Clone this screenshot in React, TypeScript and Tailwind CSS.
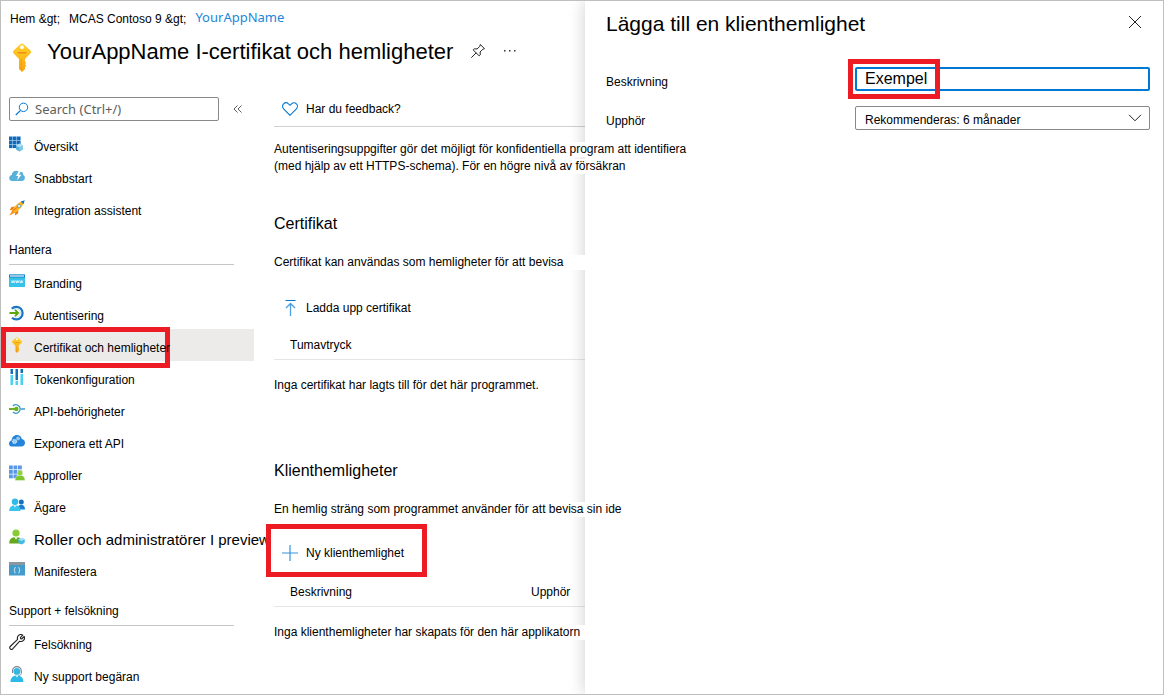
import type { ReactNode } from "react";

type NavItem = {
  label: string;
  icon: ReactNode;
  active?: boolean;
  large?: boolean;
};

const overviewItems: NavItem[] = [
  { label: "Översikt", icon: <GridCubeIcon /> },
  { label: "Snabbstart", icon: <CloudBoltIcon /> },
  { label: "Integration assistent", icon: <RocketIcon /> },
];

const manageItems: NavItem[] = [
  { label: "Branding", icon: <BrandingIcon /> },
  { label: "Autentisering", icon: <SignInIcon /> },
  { label: "Certifikat och hemligheter", icon: <KeyIcon className="size-4 shrink-0" />, active: true },
  { label: "Tokenkonfiguration", icon: <TokenIcon /> },
  { label: "API-behörigheter", icon: <ApiPermissionIcon /> },
  { label: "Exponera ett API", icon: <CloudGearIcon /> },
  { label: "Approller", icon: <AppRolesIcon /> },
  { label: "Ägare", icon: <OwnersIcon /> },
  { label: "Roller och administratörer I preview", icon: <AdminIcon />, large: true },
  { label: "Manifestera", icon: <ManifestIcon /> },
];

const supportItems: NavItem[] = [
  { label: "Felsökning", icon: <WrenchIcon /> },
  { label: "Ny support begäran", icon: <SupportIcon /> },
];

function GridCubeIcon() {
  return (
    <svg viewBox="0 0 16 16" className="size-4 shrink-0">
      {[0, 4, 8].map((y) =>
        [0, 4, 8].map((x) => (
          <rect key={`${x}-${y}`} x={x} y={y + 0.5} width="3.6" height="3.6" fill="#0f6cbd" />
        ))
      )}
      <path d="M10.500 7.500l3.500 2v4l-3.500 2-3.500-2v-4z" fill="#5ab4dc" />
      <path d="M10.500 7.500l3.500 2-3.500 2-3.500-2z" fill="#b7e1f3" />
      <path d="M10.500 11.500l3.500-2v4l-3.500 2z" fill="#83c9e8" />
    </svg>
  );
}

function CloudBoltIcon() {
  return (
    <svg viewBox="0 0 16 16" className="size-4 shrink-0">
      <path
        d="M3.200 13A3.200 3.200 0 0 1 .2 9.900c0-1.600 1.100-2.800 2.600-3C3 4.600 4.700 2.700 7.200 2.700c1 0 1.800.3 2.500.8 1.900-.6 4.500.7 4.600 3.500 1 .5 1.600 1.500 1.600 2.800 0 1.800-1.300 3.200-3.200 3.200z"
        fill="#56b0d9"
      />
      <path d="M10.200 2.500L7 8h2.200L8 12.500 12.500 6.700h-2.600L12 3z" fill="#fff" />
    </svg>
  );
}

function RocketIcon() {
  return (
    <svg viewBox="0 0 16 16" className="size-4 shrink-0">
      <path d="M6 6.500L2.500 7 .5 10.200l3.500-.4zM9.500 10L9 13.500l-3.200 2 .4-3.500z" fill="#f27d16" />
      <path d="M3.500 10L.3 15.700 6 12.500z" fill="#f7931e" />
      <path d="M13 1.200L9.500 3C7 5 4.500 8 3.200 10.500l2.300 2.300C8 11.500 11 9 13 6.500l1.800-3.700z" fill="#ffb41c" />
      <path d="M15.700.3l-4 1.200 2.800 2.800z" fill="#1d6fc0" />
      <circle cx="10" cy="6" r="1.600" fill="#e8f6fd" stroke="#2a9bd6" strokeWidth=".6" />
      <path d="M3 11.500L8.500 7" stroke="#e8721a" strokeWidth="1" />
    </svg>
  );
}

function BrandingIcon() {
  return (
    <svg viewBox="0 0 16 16" className="size-4 shrink-0">
      <rect y="1.500" width="16" height="12.500" rx=".6" fill="#37c2ea" />
      <path d="M.6 1.500h14.800a.6.6 0 0 1 .6.6V4.500H0V2.100a.6.6 0 0 1 .6-.6z" fill="#1b7fc4" />
      <rect x="1" y="2.400" width="14" height="1.200" fill="#e6f7fd" />
      <path
        d="M2.300 7.500l.9 2.500.9-2.500.9 2.500.8-2.500M6.700 7.500l.7 2.500.8-2.500.8 2.500.7-2.500M10.600 7.500l.8 2.500.8-2.500.8 2.500.8-2.500"
        fill="none"
        stroke="#fff"
        strokeWidth=".7"
      />
    </svg>
  );
}

function SignInIcon() {
  return (
    <svg viewBox="0 0 16 16" className="size-4 shrink-0" fill="none">
      <path d="M2.800 3.700A6.300 6.300 0 1 1 3 12.700" stroke="#1b74c4" strokeWidth="2.200" />
      <path d="M4.800 4.900A4 4 0 0 1 11.500 8a4 4 0 0 1-6.500 3.200" stroke="#9cd3ef" strokeWidth=".6" />
      <path d="M.5 8h8M6 4.800L9.200 8 6 11.200" stroke="#5ea60b" strokeWidth="1.800" />
    </svg>
  );
}

function KeyIcon({ className }: { className: string }) {
  return (
    <svg viewBox="0 0 18 29" className={className}>
      <defs>
        <linearGradient id="key" x1="0" x2="0" y1="0" y2="1">
          <stop offset="0" stopColor="#fed22a" />
          <stop offset="1" stopColor="#f9a313" />
        </linearGradient>
      </defs>
      <path
        d="M7.300 1.200Q9-.2 10.700 1.200l6.700 6.200q1.300 1.600 0 3.200L12 16v2.500l1.300 1.300-1.300 1.500 1.300 1.500-1.300 1.500V26l-3 3-3-3V16L.6 10.600q-1.300-1.600 0-3.200z"
        fill="url(#key)"
      />
      <circle cx="9" cy="4.200" r="1.900" fill="#fff" />
      <rect x="4.500" y="9" width="9" height="1.500" rx=".7" fill="#ef8f0e" />
      <path d="M8.200 16v11" stroke="#f0950f" strokeWidth=".8" />
    </svg>
  );
}

function TokenIcon() {
  return (
    <svg viewBox="0 0 16 16" className="size-4 shrink-0">
      <path d="M1.500 0H4v5H1.500zM6.500 0h2.500v11H6.500zM11.500 0H14v4h-2.500z" fill="#1471b9" />
      <path d="M1.500 6H4v10H1.500zM6.500 12H9v4H6.500zM11.500 5H14v11h-2.500z" fill="#45d3f1" />
    </svg>
  );
}

function ApiPermissionIcon() {
  return (
    <svg viewBox="0 0 16 16" className="size-4 shrink-0" fill="none">
      <path d="M4 4.900a4.200 4.200 0 1 1 0 6.200" stroke="#3b9bc9" strokeWidth="1.400" />
      <path d="M11.500 8H16" stroke="#3b9bc9" strokeWidth="1.500" />
      <path d="M0 8h6" stroke="#5ea60b" strokeWidth="1.800" />
      <circle cx="7.300" cy="8" r="2.200" fill="#6bb31c" />
    </svg>
  );
}

function CloudGearIcon() {
  return (
    <svg viewBox="0 0 16 16" className="size-4 shrink-0">
      <path
        d="M3.200 13.500A3.200 3.200 0 0 1 0 10.400c0-1.600 1.100-2.800 2.600-3C2.800 4.300 5 2 7.800 2c2.600 0 4.500 1.500 5 4 1.900.2 3.200 1.700 3.200 3.700 0 2.300-1.600 3.800-3.600 3.800z"
        fill="#2384dc"
      />
      <circle cx="9" cy="5.500" r="1.500" fill="#8fc5f0" stroke="#b9ddf7" strokeWidth="1" strokeDasharray="1 .5" />
      <circle cx="5.500" cy="8.500" r="1.900" fill="#8fc5f0" stroke="#d6ebfa" strokeWidth="1.200" strokeDasharray="1.100 .5" />
    </svg>
  );
}

function AppRolesIcon() {
  return (
    <svg viewBox="0 0 16 16" className="size-4 shrink-0">
      {[0, 4.500, 9].map((y) =>
        [0, 4.500, 9].map((x) => (
          <rect key={`${x}-${y}`} x={x} y={y + 0.5} width="3.800" height="3.800" fill="#5a98e6" />
        ))
      )}
      <path d="M6 15.500c0-3.500 1.700-5.300 5-5.300s5 1.800 5 5.300z" fill="#7cc52c" stroke="#fff" strokeWidth=".4" />
      <circle cx="11" cy="8" r="2.800" fill="#8ed13b" stroke="#fff" strokeWidth=".4" />
    </svg>
  );
}

function OwnersIcon() {
  return (
    <svg viewBox="0 0 16 16" className="size-4 shrink-0">
      <circle cx="12.300" cy="5" r="2.500" fill="#1572bd" />
      <path d="M8.500 12.500c0-3 1.400-4.800 3.800-4.800s3.700 1.800 3.700 4.800z" fill="#1a82d0" />
      <circle cx="6" cy="4.700" r="3.200" fill="#2fb9e4" />
      <path d="M.2 14c0-3.700 2-5.800 5.800-5.800s5.500 2.100 5.500 5.800z" fill="#38c4ee" />
      <path d="M4.500 8.300l1.500 2.200 1.500-2.200z" fill="#dff5fc" />
    </svg>
  );
}

function AdminIcon() {
  return (
    <svg viewBox="0 0 16 16" className="size-4 shrink-0">
      <circle cx="7" cy="4" r="3.600" fill="#87cc35" />
      <path d="M.2 14.500C.2 10.300 2.500 8 7 8s6 2.300 6 6.500z" fill="#64a718" />
      <path d="M5 8l2 2.800L9 8z" fill="#e3f4cf" />
      <path d="M12.500 8.800l3.200 1.500v3.400l-3.200 1.800-3.200-1.800v-3.400z" fill="#43b9e6" />
      <path d="M12.500 8.800l3.200 1.500-3.200 1.700-3.200-1.700z" fill="#a8e3f7" />
    </svg>
  );
}

function ManifestIcon() {
  return (
    <svg viewBox="0 0 16 16" className="size-4 shrink-0">
      <rect y="1" width="16" height="13.500" fill="#429bcb" />
      <rect y="1" width="16" height="3" fill="#8a979f" />
      <path
        d="M6.500 6.500c-1 0-.8.800-.8 1.500s-.2 1-.8 1.200c.6.200.8.500.8 1.200s-.2 1.600.8 1.600M9.500 6.500c1 0 .8.800.8 1.500s.2 1 .8 1.200c-.6.2-.8.500-.8 1.200s.2 1.600-.8 1.600"
        fill="none"
        stroke="#e5f4fb"
        strokeWidth=".9"
      />
    </svg>
  );
}

function WrenchIcon() {
  return (
    <svg
      viewBox="0 0 16 16"
      className="size-4 shrink-0"
      fill="none"
      stroke="#222"
      strokeWidth="1.100"
      strokeLinejoin="round"
    >
      <path d="M13.800 1.200L11.300 3.700l.3 1 1 .3 2.600-2.500c.6 1.500.3 2.900-.7 3.900-1.100 1.100-2.500 1.300-3.800.8l-7 7.700a1.700 1.700 0 0 1-2.500-2.400l7.400-7.200c-.5-1.300-.2-2.700.8-3.700 1.200-1.100 3-1.300 4.400-.4z" />
    </svg>
  );
}

function SupportIcon() {
  return (
    <svg viewBox="0 0 16 16" className="size-4 shrink-0">
      <path d="M3.500 7V5a4.300 4.300 0 0 1 8.800 0v2" fill="none" stroke="#7c8288" strokeWidth="1.100" />
      <circle cx="7.900" cy="5.400" r="3.400" fill="#32b7e3" />
      <path d="M1.500 16c0-4 2-6.500 6.400-6.500s6.400 2.500 6.400 6.500z" fill="#2bb9e9" />
      <path d="M6.300 9.500l1.600 2 1.600-2z" fill="#dff5fc" />
      <path d="M12.300 7c0 1.600-.9 2.400-2.600 2.500" fill="none" stroke="#7c8288" strokeWidth=".8" />
    </svg>
  );
}

function SearchIcon() {
  return (
    <svg viewBox="0 0 14 14" className="size-3.5 shrink-0" fill="none" stroke="#0078d4">
      <circle cx="8.500" cy="5.300" r="4.200" />
      <path d="M5.500 8.300L.8 13" strokeWidth="1.200" />
    </svg>
  );
}

function PinIcon() {
  return (
    <svg viewBox="0 0 16 16" className="size-4" fill="none" stroke="#222" strokeLinejoin="round">
      <path d="M10.300 1.500l4.200 4.200-1.800.6-2.600 2.700.2 2.800-1.100 1.100-6-6 1.100-1.100 2.800.2 2.700-2.700z" />
      <path d="M6.200 9.800L1.300 14.700" />
    </svg>
  );
}

function HeartIcon() {
  return (
    <svg viewBox="0 0 16 16" className="size-4" fill="none" stroke="#0078d4" strokeWidth="1.100">
      <path d="M8 14.300L1.600 7.900C.2 6.500.2 4.200 1.600 2.800s3.500-1.400 4.900 0L8 4.300l1.500-1.500c1.400-1.400 3.500-1.400 4.900 0s1.400 3.700 0 5.100z" />
    </svg>
  );
}

function UploadIcon() {
  return (
    <svg viewBox="0 0 16 16" className="size-4" fill="none" stroke="#0078d4">
      <path d="M3.500.5h10" />
      <path d="M8.500 16V3.500M4 8l4.500-4.500L13 8" strokeOpacity=".7" strokeWidth="1.300" />
    </svg>
  );
}

function PlusIcon() {
  return (
    <svg viewBox="0 0 16 16" className="size-4" fill="none" stroke="#0078d4" strokeOpacity=".8">
      <path d="M8 0v16M0 8h16" strokeWidth="1.200" />
    </svg>
  );
}

// Red frame that points out a step in the guide
function Highlight({ className }: { className: string }) {
  return (
    <span
      aria-hidden
      className={`pointer-events-none absolute z-20 border-5 border-[#ed1c24] ${className}`}
    />
  );
}

function NavList({ items }: { items: NavItem[] }) {
  return (
    <ul>
      {items.map((item) => (
        <li key={item.label} className={item.active ? "relative bg-[#edebe9]" : ""}>
          {item.active && <Highlight className="-top-0.5 left-0 h-[41px] w-[169px]" />}
          <a
            href="#"
            className={`flex h-8 items-center gap-[9px] pl-2 whitespace-nowrap ${
              item.active ? "relative z-30" : ""
            }`}
          >
            {item.icon}
            <span className={item.large ? "pt-1.5 text-[15px]" : "pt-1.5"}>{item.label}</span>
          </a>
        </li>
      ))}
    </ul>
  );
}

function NavHeading({ children }: { children: ReactNode }) {
  return (
    <h2 className="mr-5 ml-2 flex h-[41px] items-end border-b border-[#c8c6c4] pb-1.5">
      {children}
    </h2>
  );
}

function Sidebar() {
  return (
    <nav className="w-[253px] shrink-0">
      <div className="mb-[7px] flex items-center gap-3.5 pl-2">
        <label className="flex h-6 w-[210px] items-center gap-1.5 rounded-xs border border-[#8a8886] pl-[5px]">
          <SearchIcon />
          <input
            type="search"
            aria-label="Search"
            placeholder="Search (Ctrl+/)"
            className="w-full min-w-0 font-['Noto_Sans',sans-serif] text-[13px] leading-5 outline-none placeholder:text-[#605e5c]"
          />
        </label>
        <button type="button" aria-label="Collapse" className="text-[#605e5c]">
          <svg viewBox="0 0 10 8" className="h-2 w-2.5" fill="none" stroke="currentColor">
            <path d="M4.500.5L1 4l3.500 3.500M8.500.5L5 4l3.500 3.500" />
          </svg>
        </button>
      </div>
      <NavList items={overviewItems} />
      <NavHeading>Hantera</NavHeading>
      <NavList items={manageItems} />
      <NavHeading>Support + felsökning</NavHeading>
      <NavList items={supportItems} />
    </nav>
  );
}

function Content() {
  return (
    <main className="ml-5 min-w-0 flex-1">
      <div className="border-b border-[#d2d0ce] pb-[5px]">
        <button type="button" className="flex h-6 items-center gap-2 pl-2">
          <HeartIcon />
          Har du feedback?
        </button>
      </div>

      <p className="relative z-10 mt-[15px] flex flex-col gap-0.5 leading-[15px] whitespace-nowrap">
        <span className="w-max bg-white">
          Autentiseringsuppgifter gör det möjligt för konfidentiella program att identifiera
        </span>
        <span className="w-max bg-white">
          (med hjälp av ett HTTPS-schema). För en högre nivå av försäkran
        </span>
      </p>

      <section>
        <h2 className="mt-[38px] text-base leading-6">Certifikat</h2>
        <p className="relative z-10 mt-[19px] bg-white leading-[15px] whitespace-nowrap">
          Certifikat kan användas som hemligheter för att bevisa
        </p>
        <button type="button" className="mt-[26px] flex h-6 items-center gap-2 pl-2">
          <UploadIcon />
          Ladda upp certifikat
        </button>
        <table className="mt-2.5 w-full table-fixed border-separate border-spacing-0 text-left">
          <thead>
            <tr>
              <th className="h-[30px] border-b border-[#e6e6e6] pl-4 font-normal">Tumavtryck</th>
            </tr>
          </thead>
          <tbody>
            <tr>
              <td className="pt-[18px] leading-[15px] whitespace-nowrap">
                Inga certifikat har lagts till för det här programmet.
              </td>
            </tr>
          </tbody>
        </table>
      </section>

      <section>
        <h2 className="mt-[66px] text-base leading-6">Klienthemligheter</h2>
        <p className="relative z-10 mt-[19px] w-max bg-white leading-[15px] whitespace-nowrap">
          En hemlig sträng som programmet använder för att bevisa sin ide
        </p>
        <div className="relative mt-6">
          <button type="button" className="flex h-6 items-center gap-2 pl-2">
            <PlusIcon />
            Ny klienthemlighet
          </button>
          <Highlight className="-top-[17px] -left-2 h-[53px] w-[161px]" />
        </div>
        <table className="mt-3 w-full table-fixed border-separate border-spacing-0 text-left">
          <thead>
            <tr>
              <th className="h-[30px] border-b border-[#e6e6e6] pl-4 font-normal">Beskrivning</th>
              <th className="w-[54px] border-b border-[#e6e6e6] font-normal">Upphör</th>
            </tr>
          </thead>
          <tbody>
            <tr>
              <td colSpan={2} className="pt-[18px] leading-[15px] whitespace-nowrap">
                <span className="relative z-10 block bg-white">
                  Inga klienthemligheter har skapats för den här applikatorn
                </span>
              </td>
            </tr>
          </tbody>
        </table>
      </section>
    </main>
  );
}

function AddSecretPanel() {
  return (
    <aside className="min-w-0 flex-1 bg-white pr-[13px] pl-[21px] shadow-[0_0_16px_rgba(0,0,0,0.2)]">
      <header className="flex h-[66px] items-start justify-between pt-2">
        <h2 className="text-[21px] leading-[30px]">Lägga till en klienthemlighet</h2>
        <button type="button" aria-label="Close" className="px-2 py-1.5">
          <svg viewBox="0 0 14 14" className="size-3.5" fill="none" stroke="#222">
            <path d="M1 1l12 12M13 1L1 13" />
          </svg>
        </button>
      </header>
      <form className="grid grid-cols-[249px_1fr] gap-y-[15px]">
        <label htmlFor="description" className="pt-[7px]">
          Beskrivning
        </label>
        <div className="relative">
          <input
            id="description"
            defaultValue="Exempel"
            className="h-6 w-full rounded-xs border-2 border-[#0078d4] px-2 text-base outline-none"
          />
          <Highlight className="-top-2 -left-[7px] h-10 w-[92px]" />
        </div>
        <label htmlFor="expires" className="pt-[7px]">
          Upphör
        </label>
        <div className="relative">
          <select
            id="expires"
            className="h-6 w-full appearance-none rounded-xs border border-[#8a8886] bg-white pt-1 pl-[9px]"
          >
            <option>Rekommenderas: 6 månader</option>
          </select>
          <svg
            viewBox="0 0 14 8"
            className="pointer-events-none absolute top-2 right-2 h-2 w-3.5"
            fill="none"
            stroke="#222"
          >
            <path d="M1 .8l6 6 6-6" />
          </svg>
        </div>
      </form>
    </aside>
  );
}

export default function App() {
  return (
    <div className="flex min-h-screen overflow-hidden border border-[#bfbfbf] bg-white font-['Liberation_Sans',Arial,sans-serif] text-xs text-black">
      <div className="w-[584px] shrink-0">
        <header className="h-24 pt-2 pl-[9px]">
          <div className="flex h-5 items-center gap-[9px] whitespace-nowrap">
            <a href="#">Hem &amp;gt;</a>
            <a href="#">MCAS Contoso 9 &amp;gt;</a>
            <a href="#" className="pb-1 font-['Noto_Sans',sans-serif] text-[13px] leading-5 text-[#1a86d9]">
              YourAppName
            </a>
          </div>
          <div className="flex items-start">
            <KeyIcon className="mt-3.5 h-[29px] w-6" />
            <h1 className="mt-2 ml-[13px] text-[22px] leading-[30px] whitespace-nowrap">
              YourAppName I-certifikat och hemligheter
            </h1>
            <button type="button" aria-label="Pin" className="mt-3.5 ml-[17px]">
              <PinIcon />
            </button>
            <button type="button" aria-label="More" className="mt-3.5 ml-4">
              <svg viewBox="0 0 16 16" className="size-4" fill="#333">
                <rect x="2" y="7" width="1.500" height="1.500" />
                <rect x="7" y="7" width="1.500" height="1.500" />
                <rect x="12" y="7" width="1.500" height="1.500" />
              </svg>
            </button>
          </div>
        </header>
        <div className="flex">
          <Sidebar />
          <Content />
        </div>
      </div>
      <AddSecretPanel />
    </div>
  );
}
